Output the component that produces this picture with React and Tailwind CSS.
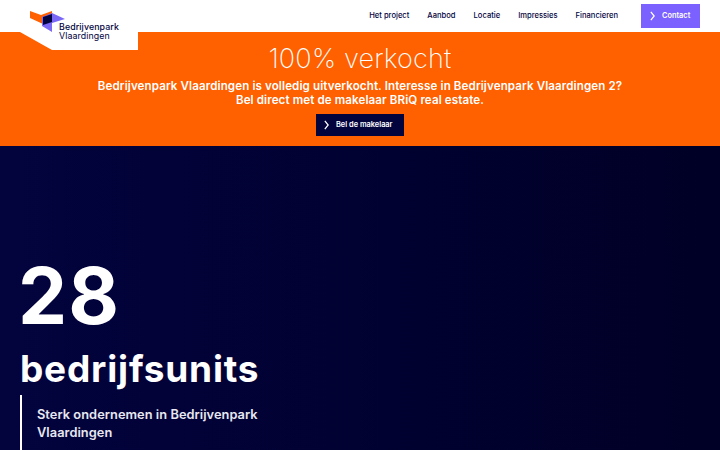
import React from 'react';

const font = { fontFamily: 'Inter, "Noto Sans", sans-serif' };

const links = ['Het project', 'Aanbod', 'Locatie', 'Impressies', 'Financieren'];

function Chevron({ className }) {
  return (
    <svg viewBox="0 0 6 12" className={className} fill="none" stroke="currentColor" strokeWidth="1.5">
      <path d="M1 1l4 5-4 5" />
    </svg>
  );
}

function Logo() {
  return (
    <div className="absolute left-0 top-0 z-10 h-[50px] w-[138px] bg-white [clip-path:polygon(0_0,100%_0,100%_100%,52px_100%,20px_32px,0_32px)]">
      <svg viewBox="29 10 38 24" className="absolute left-[29px] top-[10px] h-[24px] w-[38px]">
        <path d="M30 11l11 4 11-4v6l-9 3v4l-13-6z" fill="#ff6000" />
        <path d="M52 13l13 6-13 4v9l-10-6v-9z" fill="#7b68f6" />
        <path d="M43 17l9-3v8l-9 3z" fill="#03033e" />
      </svg>
      <div className="absolute left-[59px] top-[22px] text-[8.8px] leading-[9px] tracking-[0.1px] text-[#03033e]">
        <div className="font-medium">Bedrijvenpark</div>
        <div>Vlaardingen</div>
      </div>
    </div>
  );
}

function Header() {
  return (
    <header className="relative flex h-[32px] items-center justify-end bg-white pr-[20px]">
      <Logo />
      <nav className="flex items-center gap-[18px] text-[7.6px] font-medium text-[#03033e]">
        {links.map((l) => (
          <a key={l}>{l}</a>
        ))}
      </nav>
      <a className="ml-[23px] flex h-[24px] w-[59px] items-center bg-[#7b61ff] pl-[9px] text-[7.4px] font-semibold text-white">
        <Chevron className="mr-[7px] h-[10px] w-[5px]" />
        Contact
      </a>
    </header>
  );
}

function Banner() {
  return (
    <section className="flex h-[114px] flex-col items-center bg-[#ff6000] text-white">
      <h2 className="mt-[11px] text-[27px] font-extralight leading-[32px] tracking-[0.2px]">100% verkocht</h2>
      <p className="mt-[5px] text-center text-[11.6px] font-semibold leading-[13.5px] tracking-[0.1px]">
        Bedrijvenpark Vlaardingen is volledig uitverkocht. Interesse in Bedrijvenpark Vlaardingen 2?
        <br />
        Bel direct met de makelaar BRiQ real estate.
      </p>
      <a className="mt-[7px] flex h-[22px] w-[88px] items-center bg-[#03033e] pl-[8px] text-[7.4px] font-semibold">
        <Chevron className="mr-[7px] h-[10px] w-[5px]" />
        Bel de makelaar
      </a>
    </section>
  );
}

function Hero() {
  return (
    <section className="h-[304px] overflow-hidden bg-linear-to-r from-[#03033e] to-[#000026] pl-[20px] pt-[110px] text-white">
      <div className="-ml-[2px] text-[78px] font-bold leading-[80px] tracking-[1px]">28</div>
      <div className="mt-[12px] text-[37px] font-bold leading-[42px] tracking-[0.8px]">bedrijfsunits</div>
      <div className="mt-[5px] border-l-[2px] border-white pb-[20px] pl-[15px] pt-[11px] text-[12.8px] font-semibold leading-[18px] tracking-[0.05px] text-[#e8e8f2]">
        Sterk ondernemen in Bedrijvenpark
        <br />
        Vlaardingen
      </div>
    </section>
  );
}

export default function App() {
  return (
    <div className="h-[450px] w-[720px] overflow-hidden" style={font}>
      <Header />
      <Banner />
      <Hero />
    </div>
  );
}
